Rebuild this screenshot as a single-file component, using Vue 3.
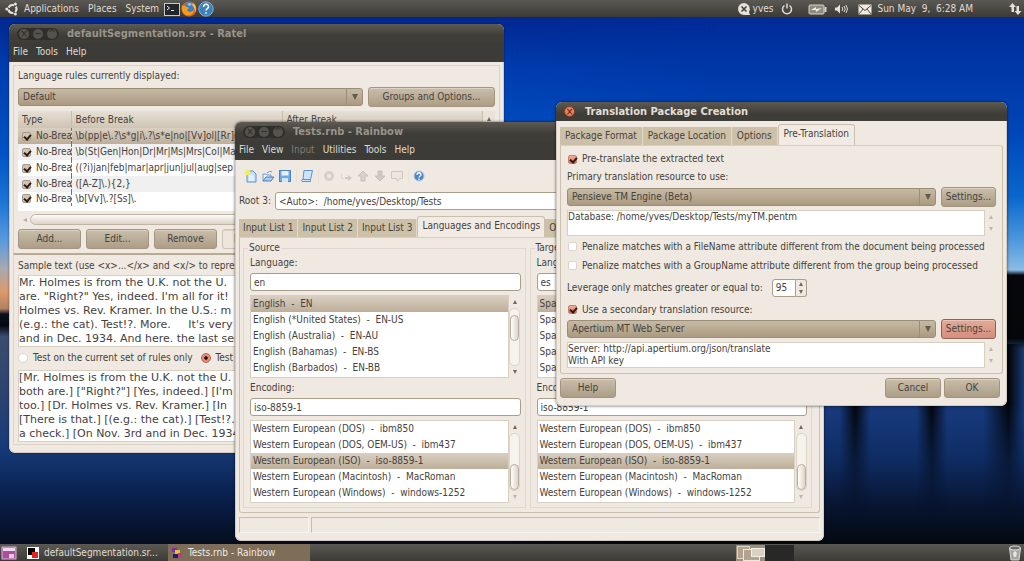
<script setup>
import { ref } from 'vue'

const rules = [
  '\\b(pp|e\\.?\\s*g|i\\.?\\s*e|no|[Vv]ol|[Rr]ev',
  '\\b(St|Gen|Hon|Dr|Mr|Ms|Mrs|Col|Maj',
  '((?i)jan|feb|mar|apr|jun|jul|aug|sep',
  '([A-Z]\\.){2,}',
  '\\b[Vv]\\.?[Ss]\\.'
]
const english = [
  'English  -  EN',
  'English (*United States)  -  EN-US',
  'English (Australia)  -  EN-AU',
  'English (Bahamas)  -  EN-BS',
  'English (Barbados)  -  EN-BB'
]
const spanish = ['Spanish', 'Spanish', 'Spanish', 'Spanish', 'Spanish']
const encodings = [
  'Western European (DOS)  -  ibm850',
  'Western European (DOS, OEM-US)  -  ibm437',
  'Western European (ISO)  -  iso-8859-1',
  'Western European (Macintosh)  -  MacRoman',
  'Western European (Windows)  -  windows-1252'
]
const groups = [
  { id: 'src', title: 'Source', code: 'en', languages: english },
  { id: 'trg', title: 'Target', code: 'es', languages: spanish }
]
const sample = ref([
  'Mr. Holmes is from the U.K. not the U.',
  'are. "Right?" Yes, indeed. I\'m all for it!',
  'Holmes vs. Rev. Kramer. In the U.S.: m',
  '(e.g.: the cat). Test!?. More.     It\'s very',
  'and in Dec. 1934. And here. the last sen'
].join('\n'))
const result = ref([
  '[Mr. Holmes is from the U.K. not the U.',
  'both are.] ["Right?"] [Yes, indeed.] [I\'m',
  'too.] [Dr. Holmes vs. Rev. Kramer.] [In',
  '[There is that.] [(e.g.: the cat).] [Test!?.',
  'a check.] [On Nov. 3rd and in Dec. 1934'
].join('\n'))
const database = ref('Database: /home/yves/Desktop/Tests/myTM.pentm')
const server = ref('Server: http://api.apertium.org/json/translate\nWith API key')
const rainbowTabs = ['Input List 1', 'Input List 2', 'Input List 3', 'Languages and Encodings', 'Other Settings']
const packageTabs = ['Package Format', 'Package Location', 'Options', 'Pre-Translation']
</script>

<template>
  <div class="desktop">
    <div class="scenery"></div>

    <header class="bar top">
      <svg class="i14" viewBox="0 0 14 14"><circle cx="7.5" cy="7" r="4" fill="none" stroke="#e6e2da" stroke-width="2.2" stroke-dasharray="6.4 2" stroke-dashoffset="3.2" /><circle cx="1.8" cy="7" r="1.5" fill="#e6e2da" /><circle cx="10.4" cy="1.9" r="1.5" fill="#e6e2da" /><circle cx="10.4" cy="12.1" r="1.5" fill="#e6e2da" /></svg>
      <nav class="launch">
        <a href="#">Applications</a><a href="#">Places</a><a href="#">System</a>
      </nav>
      <div class="apps">
        <svg class="i16" viewBox="0 0 16 16"><rect x="0.5" y="2.5" width="15" height="12" fill="#22262a" stroke="#c9c9c5" /><path d="M3 5l2.5 2L3 9M7 9.5h3" stroke="#eee" fill="none" /></svg>
        <svg class="i16" viewBox="0 0 16 16"><circle cx="8" cy="8" r="7.5" fill="#e2661b" /><circle cx="8.5" cy="6" r="5" fill="#3d7fc4" /><path d="M6 3q3-2 5 0-1 2-3 2z" fill="#8fc0ea" /><path d="M1 4c1 1 2 1 3 1l4 2-2 2c1 2 4 3 7 0-1 5-5 6-8 5S0 9 1 4z" fill="#f39a1f" /><path d="M12 2c3 2 4 6 2 9 0-3-1-5-3-7z" fill="#f7c33a" /></svg>
        <svg class="i16" viewBox="0 0 16 16"><circle cx="8" cy="8" r="7.2" fill="#3f80bb" stroke="#7db0da" /><path d="M5.5 6c0-4 5.500-3.500 5 0-.3 1.600-2.500 1.700-2.500 3.600M8 11.300v1.500" stroke="#fff" stroke-width="1.500" fill="none" /></svg>
      </div>
      <div class="tray">
        <svg class="i14" viewBox="0 0 14 14"><path d="M7 1a6 6 0 1 0 0 12h6l-1-3A6 6 0 0 0 7 1z" fill="#e6e2da" /><path d="M4.500 4.500l5 5m0-5l-5 5" stroke="#45433e" stroke-width="1.600" /></svg>
        <span class="user">yves</span>
        <svg class="i14 power" viewBox="0 0 14 14"><path d="M4.500 3.500a4.500 4.500 0 1 0 5 0M7 1.500v5" fill="none" stroke="#dedad2" stroke-width="1.500" /></svg>
        <svg class="i20" viewBox="0 0 20 14"><rect x="1" y="3" width="15" height="9" rx="1" fill="#8d8b82" stroke="#d8d4ca" /><rect x="16.500" y="5" width="2" height="5" fill="#d8d4ca" /><path d="M3 8l5-3v2l6-1-6 4V8z" fill="#eeeae0" /></svg>
        <svg class="i14 sound" viewBox="0 0 14 14"><path d="M1 5.500h2l3-3v9l-3-3H1z" fill="#e6e2da" /><path d="M8 5q1.500 2 0 4M10 4q2.500 3 0 6M12 3q3 4 0 8" fill="none" stroke="#dedad2" /></svg>
        <svg class="i14" viewBox="0 0 14 14"><rect x="0.500" y="2.500" width="13" height="10" fill="#efebe0" /><path d="M1 3.500l6 5 6-5M1 12l4-5M13 12L9 7" fill="none" stroke="#4a4842" /></svg>
        <time class="clock">Sun May&nbsp; 9,&nbsp; 6:28 AM</time>
        <svg class="i14" viewBox="0 0 14 14"><path d="M4.500 1L8 5H6v5H3.500V5H1zM10 13L6.500 9h2V4H11v5h2.500z" fill="#e6e2da" /></svg>
      </div>
    </header>

    <!-- Ratel -->
    <section class="window ratel">
      <div class="title dim">
        <span class="pill"><i>×</i><i>−</i><i>^</i></span>
        <h1>defaultSegmentation.srx - Ratel</h1>
      </div>
      <nav class="menu"><a href="#">File</a><a href="#">Tools</a><a href="#">Help</a></nav>
      <div class="body">
        <div class="frame upper">
          <label class="line" for="langrules">Language rules currently displayed:</label>
          <div class="pick">
            <div class="combo"><select id="langrules"><option>Default</option></select><b></b></div>
            <button class="options">Groups and Options...</button>
          </div>
          <div class="grid">
            <table>
              <thead><tr><th class="c1">Type</th><th class="c2">Before Break</th><th>After Break</th></tr></thead>
              <tbody>
                <tr v-for="(r, i) in rules" :key="i" :class="{ on: i === 0, odd: i % 2 === 1 }">
                  <td class="c1"><label><input type="checkbox" class="check tan" checked /><span>No-Break</span></label></td>
                  <td class="c2">{{ r }}</td>
                  <td></td>
                </tr>
              </tbody>
            </table>
            <div class="side"><b class="up"></b></div>
          </div>
          <div class="hscroll"><b class="left"></b><span></span></div>
          <div class="actions">
            <button>Add...</button><button>Edit...</button><button>Remove</button><button disabled>Move Up</button><button disabled>Move Down</button>
          </div>
        </div>
        <div class="frame lower">
          <label class="line clip" for="sample">Sample text (use &lt;x&gt;...&lt;/x&gt; and &lt;x/&gt; to repres</label>
          <textarea id="sample" v-model="sample" class="big" rows="5"></textarea>
          <div class="radios">
            <label><input type="radio" name="scope" />Test on the current set of rules only</label>
            <label><input type="radio" name="scope" checked />Test</label>
          </div>
          <textarea v-model="result" class="big" rows="5" aria-label="Segmented text"></textarea>
        </div>
      </div>
    </section>

    <!-- Rainbow -->
    <section class="window rainbow">
      <div class="title dim">
        <span class="pill"><i>×</i><i>−</i><i>^</i></span>
        <h1>Tests.rnb - Rainbow</h1>
      </div>
      <nav class="menu"><a href="#">File</a><a href="#">View</a><a href="#" class="off">Input</a><a href="#">Utilities</a><a href="#">Tools</a><a href="#">Help</a></nav>
      <div class="body">
        <div class="tools">
          <button aria-label="New"><svg viewBox="0 0 14 14"><path d="M3 2h6l3 3v8H3z" fill="#c6e0fa" stroke="#5b92d0" /><path d="M5 7h5M5 9h5M5 11h5" stroke="#fff" /><circle cx="3.500" cy="3.500" r="2.800" fill="#f5ee5c" /></svg></button>
          <button aria-label="Open"><svg viewBox="0 0 14 14"><path d="M2 12V5h3l1 1h4v2" fill="#e9f3fd" stroke="#6c9bd0" /><path d="M2 12l3-4h8l-3 4z" fill="#a9cdf3" stroke="#4a7fc0" /><path d="M6 4q3-3 5-1" fill="none" stroke="#6c9bd0" /></svg></button>
          <button aria-label="Save"><svg viewBox="0 0 14 14"><rect x="1.500" y="1.500" width="11" height="11" fill="#6ea8e6" stroke="#4a82c6" /><rect x="3.500" y="2" width="7" height="4.500" fill="#e8f2fc" /><rect x="4" y="9" width="6" height="4" fill="#d5e5f7" /></svg></button>
          <i></i>
          <button aria-label="Log"><svg viewBox="0 0 14 14"><path d="M4 1.500h8.500l-2 9v2H2q-1-1 0-2h1z" fill="#cfe4fb" stroke="#5e92cf" /><path d="M2 10.500h8.500" stroke="#5e92cf" /></svg></button>
          <i></i>
          <button aria-label="Add" disabled><svg viewBox="0 0 14 14"><circle cx="7" cy="7" r="3.500" fill="#efebe4" stroke="#d6d1c8" stroke-width="3" /></svg></button>
          <button aria-label="Add as" disabled><svg viewBox="0 0 14 14"><path d="M2.500 4.500v5h3" fill="none" stroke="#ddd8d0" /><path d="M6 8h3V6l4 3-4 3v-2H6z" fill="#cfcac1" /></svg></button>
          <button aria-label="Up" disabled><svg viewBox="0 0 14 14"><path d="M7 2l5 5H9v5H5V7H2z" fill="#d9d4cb" stroke="#c6c0b6" /></svg></button>
          <button aria-label="Down" disabled><svg viewBox="0 0 14 14"><path d="M7 12l5-5H9V2H5v5H2z" fill="#cfcac0" stroke="#c6c0b6" /></svg></button>
          <button aria-label="View" disabled><svg viewBox="0 0 14 14"><path d="M1.500 2.500h11v7h-3l-2 3-1-3h-5z" fill="#ebe6df" stroke="#cdc7be" /></svg></button>
          <i></i>
          <button aria-label="Help"><svg viewBox="0 0 14 14"><circle cx="7" cy="7" r="5" fill="#4d86c8" stroke="#b4cdea" /><path d="M5 6c0-3 4-3 4 0 0 1-2 1-2 2.500M7 9.500V11" stroke="#fff" stroke-width="1.300" fill="none" /></svg></button>
        </div>
        <div class="root"><label for="root">Root 3:</label><input id="root" type="text" value="&lt;Auto&gt;:  /home/yves/Desktop/Tests" /></div>
        <div class="tabs"><button v-for="(t, i) in rainbowTabs" :key="t" :class="{ active: i === 3 }">{{ t }}</button></div>
        <div class="panel pair">
          <fieldset v-for="g in groups" :key="g.id">
            <legend>{{ g.title }}</legend>
            <label :for="g.id + '-lang'">Language:</label>
            <input :id="g.id + '-lang'" type="text" :value="g.code" />
            <div class="listrow">
              <ul><li v-for="(l, i) in g.languages" :key="i" :class="{ on: i === 0 }">{{ l }}</li></ul>
              <div class="scroll"><b class="up"></b><span class="track"><em></em></span><b class="down"></b></div>
            </div>
            <label :for="g.id + '-enc'">Encoding:</label>
            <input :id="g.id + '-enc'" type="text" value="iso-8859-1" />
            <div class="listrow">
              <ul><li v-for="(l, i) in encodings" :key="i" :class="{ on: i === 2 }">{{ l }}</li></ul>
              <div class="scroll end"><b class="up"></b><span class="track"><em></em></span><b class="down pale"></b></div>
            </div>
          </fieldset>
        </div>
        <div class="status"><span></span><span></span></div>
      </div>
    </section>

    <!-- Translation package dialog -->
    <section class="window dialog">
      <div class="title">
        <button class="close" aria-label="Close">×</button>
        <h1>Translation Package Creation</h1>
      </div>
      <div class="body">
        <div class="tabs"><button v-for="(t, i) in packageTabs" :key="t" :class="{ active: i === 3 }">{{ t }}</button></div>
        <div class="panel form">
          <label class="opt"><input type="checkbox" class="check" checked />Pre-translate the extracted text</label>
          <label class="line" for="primary">Primary translation resource to use:</label>
          <div class="pick">
            <div class="combo"><select id="primary"><option>Pensieve TM Engine (Beta)</option></select><b></b></div>
            <button class="settings">Settings...</button>
          </div>
          <div class="memo"><textarea v-model="database" rows="2" aria-label="Primary settings"></textarea><div><b class="up pale"></b><b class="down pale"></b></div></div>
          <label class="opt"><input type="checkbox" class="check" />Penalize matches with a FileName attribute different from the document being processed</label>
          <label class="opt"><input type="checkbox" class="check" />Penalize matches with a GroupName attribute different from the group being processed</label>
          <div class="lever"><label for="lever">Leverage only matches greater or equal to:</label><div class="spin"><input id="lever" type="text" value="95" /><span><b class="up"></b><b class="down"></b></span></div></div>
          <label class="opt"><input type="checkbox" class="check" checked />Use a secondary translation resource:</label>
          <div class="pick">
            <div class="combo"><select aria-label="Secondary resource"><option>Apertium MT Web Server</option></select><b></b></div>
            <button class="settings hot">Settings...</button>
          </div>
          <div class="memo"><textarea v-model="server" rows="2" aria-label="Secondary settings"></textarea><div><b class="up pale"></b><b class="down pale"></b></div></div>
        </div>
        <div class="foot"><button>Help</button><button class="push">Cancel</button><button>OK</button></div>
      </div>
    </section>

    <footer class="bar bottom">
      <svg class="i16" viewBox="0 0 16 16"><rect x="1" y="2" width="14" height="12" fill="#a8509c" stroke="#dcb8d8" /><rect x="2" y="3" width="12" height="3" fill="#efd9ec" /><rect x="8" y="9" width="5" height="4" fill="#e7c6e2" /></svg>
      <button class="task"><svg class="i14" viewBox="0 0 14 14"><rect x="1" y="1" width="12" height="12" fill="#fff" /><rect x="2" y="2" width="7" height="7" fill="#000" /><rect x="6" y="6" width="6" height="6" fill="#e0261c" /></svg>defaultSegmentation.sr...</button>
      <button class="task cur"><svg class="i14" viewBox="0 0 14 14"><path d="M2 2h5v4H2z" fill="#7a2fa0" /><path d="M5 4h5v4H5z" fill="#e8c32e" /><path d="M3 8h5v4H3z" fill="#241c60" /><path d="M8 7h4v5H8z" fill="#c23a8a" /></svg>Tests.rnb - Rainbow</button>
      <div class="pager">
        <svg viewBox="0 0 58 16"><rect width="29" height="16" fill="#9c907c" /><rect x="29" width="29" height="16" fill="#282826" /><rect x="1.500" y="1.500" width="12" height="12" fill="#b0a18b" stroke="#ddd6c8" /><rect x="7.500" y="4.500" width="16" height="11" fill="#b3a48f" stroke="#eee8dc" /><rect x="15.500" y="3.500" width="13" height="8" fill="#d8d2c5" stroke="#f2eee6" /></svg>
      </div>
      <svg class="i16" viewBox="0 0 16 16"><path d="M2.500 3h11l-1.500 12H4z" fill="#a5a5a1" stroke="#d6d6d2" /><ellipse cx="8" cy="3" rx="5.500" ry="2" fill="#6b6b68" stroke="#e2e2de" /><path d="M6 8l2-2 2 2-1 4H7z" fill="#e5e5e2" /></svg>
    </footer>
  </div>
</template>

<style>
html, body { margin: 0; height: 100%; }
</style>

<style scoped>
* { box-sizing: border-box; }
.desktop {
  position: relative; display: flex; flex-direction: column; justify-content: space-between;
  min-height: 100vh; overflow: hidden; color: #45423d;
  font: 10px/12px "DejaVu Sans Condensed", "DejaVu Sans", sans-serif;
  background: linear-gradient(#002790 3%, #003cae 12%, #0052c4 27%, #1d74d6 36%, #5b9bdc 43%, #a9a9b0 48%, #dc9a68 52%, #b38163 55%, #0a0f1c 56%, #05070e 58%, #3b4d6e 60%, #2c4370 70%, #163a78 80%, #0a2150 88%, #060d1e 97%);
}
.scenery {
  position: absolute; top: 17px; bottom: 17px; right: 0; width: 50%;
  background: linear-gradient(#002b98, #0046b8 22%, #0a66cc 34%, #4b95dc 42%, #8bbce6 48%, #05070c 49%, #04060a 61%, #1c3a6c 63%, #16387a 76%, #0f2c62 84%, #081430 93%, #04080f);
  mask-image: linear-gradient(90deg, transparent, #000 40%);
}
.scenery::after {
  content: ""; position: absolute; left: 0; right: 0; top: 62%; bottom: 0;
  background: linear-gradient(90deg, transparent 64%, #020409 67%, transparent 70%, transparent 79%, #020409 82%, transparent 85%, transparent 92%, #020409 97%, transparent);
  mask-image: linear-gradient(#000 30%, transparent 85%);
}
button, input, select, textarea { font: inherit; color: inherit; margin: 0; }
button { padding: 0; }
a { color: inherit; text-decoration: none; }
h1 { margin: 0; font-size: 11px; line-height: 12px; font-weight: bold; }
svg { display: block; flex: none; }
.i14 { width: 14px; height: 14px; }
.i16 { width: 16px; height: 16px; }
.i20 { width: 20px; height: 14px; }

.bar { position: relative; display: flex; align-items: center; height: 17px; color: #e0dcd3; background: linear-gradient(#5b5953, #3b3a36); }
.top { padding: 0 2px 0 5px; }
.launch { display: flex; gap: 9px; margin: 0 5px; }
.apps { display: flex; gap: 1px; }
.tray { display: flex; align-items: center; margin-left: auto; }
.user { margin: 0 7px 0 2px; }
.power { margin-right: 14px; }
.sound { margin: 0 10px 0 6px; }
.clock { margin: 0 35px 0 5px; }
.bottom { gap: 2px; padding: 0 1px; }
.task { display: flex; align-items: center; gap: 4px; width: 142px; height: 17px; padding: 0 2px; border: 0; background: none; text-align: left; }
.task:first-of-type { margin-left: 5px; }
.cur { background: #7d6d59; color: #efebe3; }
.pager { margin: 0 211px 0 auto; }
.pager svg { width: 58px; height: 16px; }

.window { position: absolute; border-radius: 6px; background: #efe9e1; box-shadow: 0 0 2px #0008; overflow: hidden; }
.ratel { left: 9px; top: 24px; width: 495px; }
.rainbow { left: 235px; top: 122px; width: 589px; box-shadow: 0 0 3px #000a; }
.dialog { left: 556px; top: 102px; width: 451px; box-shadow: 0 0 3px #000a; }
.title { display: flex; align-items: center; gap: 8px; height: 19px; padding: 0 8px; background: linear-gradient(#5d5a53, #3f3d38 60%); color: #e4dfd5; }
.dialog .title { gap: 10px; }
.dim { color: #99948a; }
.pill { display: flex; gap: 4px; align-items: center; width: 42px; height: 12px; padding: 0 2px; border-radius: 6px; background: #2f2e2b; }
.pill i { width: 10px; height: 10px; border-radius: 50%; background: #55534d; color: #2c2b28; font-style: normal; line-height: 10px; text-align: center; }
.close { width: 11px; height: 11px; border: 1px solid #8b3a22; border-radius: 50%; background: #e9825f; color: #4b1d10; line-height: 9px; text-align: center; }
.menu { display: flex; gap: 8px; height: 19px; padding: 3px 4px; background: #3c3b37; color: #dfdbd2; }
.menu .off { color: #817c72; }
.body { padding: 3px 4px 8px; border: solid #d3cbbf; border-width: 0 1px 1px; border-radius: 0 0 6px 6px; }
.body { padding-left: 3px; padding-right: 3px; padding-bottom: 7px; }

button { cursor: default; }
.pick button, .actions button, .foot button {
  height: 20px; border: 1px solid #a3957f; border-radius: 3px;
  background: linear-gradient(#cabda9, #bbae99 50%, #ac9d85); box-shadow: inset 0 1px #ddd2c1;
}
.actions button:disabled { color: #aaa297; background: #ece6dd; border-color: #cdc4b6; }
.pick button.hot { background: linear-gradient(#e2ab9a, #d58e7c); border-color: #8b6658; box-shadow: inset 0 1px #edc4b7; }
.pick { display: flex; align-items: center; gap: 5px; }
.combo { position: relative; flex: 1; display: flex; }
.combo select { appearance: none; width: 100%; height: 18px; padding: 0 4px; border: 1px solid #9b8d76; border-radius: 3px; background: linear-gradient(#c6b9a4, #b9ab93 50%, #a99a80); }
.combo b { position: absolute; right: 0; top: 1px; bottom: 1px; width: 17px; border-left: 1px solid #9b8d76; pointer-events: none; }
.combo b::after { content: ""; position: absolute; left: 5px; top: 5px; border: 3px solid transparent; border-top: 6px solid #625a4d; border-bottom: 0; }

.up, .down, .left { display: block; width: 0; height: 0; border: 2px solid transparent; }
.up { border-top: 0; border-bottom: 4px solid #6d675e; }
.down { border-bottom: 0; border-top: 4px solid #6d675e; }
.left { border-left: 0; border-right: 4px solid #b5aea3; }
.up.pale { border-bottom-color: #bdb6aa; }
.down.pale { border-top-color: #bdb6aa; }

.check { appearance: none; position: relative; flex: none; width: 9px; height: 9px; border: 1px solid #ddd5ca; border-radius: 2px; background: #fff; }
.check:checked { background: linear-gradient(#f0ab98, #dd715a); border-color: #c9826f; }
.check.tan:checked { background: #cfc4b2; border-color: #a69a86; }
.check:checked::after { content: ""; position: absolute; left: 2px; top: 0; width: 3px; height: 5px; border: solid #2c1c18; border-width: 0 2px 2px 0; transform: rotate(40deg); }
input[type="text"] { width: 100%; height: 18px; padding: 0 3px; border: 1px solid #aa9e8a; border-radius: 3px; background: #fff; }
textarea { display: block; width: 100%; resize: none; border: 1px solid #d8cfc1; background: #fff; overflow: hidden; white-space: pre; padding: 0; }
.line { display: block; line-height: 16px; }

.frame { padding: 0 4px; border: 1px solid #ddd4c7; }
.upper { padding-top: 2px; border-bottom: 2px solid #b9aa93; }
.lower { border-top: 0; padding-top: 3px; padding-bottom: 2px; }
.upper .line { margin-bottom: 3px; }
.options { width: 127px; }
.grid { display: flex; margin-top: 4px; }
table { flex: 1; table-layout: fixed; width: 0; border-collapse: collapse; background: #fff; }
th { height: 17px; padding: 0 4px; text-align: left; font-weight: normal; background: linear-gradient(#e6dfd4, #cfc4b4); border-right: 1px solid #c9bead; }
td { height: 16px; padding: 0 4px; white-space: nowrap; overflow: hidden; }
.c1 { width: 53px; }
td.c1 { border-right: 1px dashed #77726a; padding-right: 0; }
.c2 { width: 211px; }
td label { display: flex; align-items: center; gap: 5px; }
.on { background: linear-gradient(#d9cfc1, #bdae99); }
.odd { background: #f0f0f0; }
tbody { border-bottom: 5px solid #fff; }
.side { width: 12px; padding: 6px 4px; background: #e9e2d7; }
.hscroll { display: flex; align-items: center; gap: 3px; height: 12px; margin-top: 3px; padding-left: 5px; }
.hscroll span { flex: 1; height: 11px; border: 1px solid #bfb5a5; border-radius: 6px; background: linear-gradient(#fdfbf7, #ddd4c6); }
.actions { display: flex; gap: 5px; margin: 3px 0 4px; }
.actions button { width: 63px; }
.actions button:last-child { flex: 1; }
.clip { white-space: nowrap; }
.big { font-family: "DejaVu Sans", sans-serif; font-size: 11px; line-height: 14px; }
.lower .line { margin-bottom: 1px; }
.radios { display: flex; gap: 8px; height: 23px; }
.radios label { display: flex; align-items: center; gap: 5px; }
.radios input { appearance: none; width: 10px; height: 10px; border: 1px solid #ddd5ca; border-radius: 50%; background: #fff; }
.radios input:checked { border-color: #b9644f; background: radial-gradient(#1d0d0a 0 25%, #e58a76 35%); }

.tools { display: flex; align-items: center; gap: 3px; height: 26px; padding: 0 5px; }
.tools button { width: 14px; height: 14px; border: 0; background: none; }
.tools i { width: 1px; height: 14px; margin-left: 1px; background: #e8e1d8; }
.root { display: flex; align-items: center; gap: 4px; margin-top: 3px; white-space: nowrap; }
.root input { white-space: pre; }

.tabs { display: flex; align-items: flex-end; height: 21px; overflow: hidden; }
.tabs button { height: 18px; padding: 0 5px; border: 0; border-right: 1px solid #e3dac9; background: #cdc0a8; white-space: nowrap; }
.tabs .active { height: 21px; padding-bottom: 2px; border: 1px solid #cbc0ae; border-bottom: 0; border-radius: 3px 3px 0 0; background: #f1ebe4; }
.rainbow .tabs { margin-top: 6px; }
.rainbow .tabs button { padding-left: 4px; padding-right: 4px; }
.panel { border: 1px solid #cbc0ae; border-top-color: #d8cfc0; border-radius: 0 3px 3px 3px; }
.pair { display: flex; gap: 4px; padding: 4px 7px 4px 3px; }
fieldset { flex: 1; min-width: 0; margin: 0; padding: 2px 4px 1px 6px; border: 1px solid #e0d8cc; }
legend { margin-left: -2px; padding: 0 1px; }
fieldset label { display: block; line-height: 14px; margin-bottom: 3px; }
.listrow { display: flex; margin: 4px 0 3px; }
ul { flex: 1; margin: 0; padding: 0 0 1px; list-style: none; background: #fff; border: 1px solid #d8cfc1; }
li { height: 16px; padding: 0 2px; line-height: 16px; white-space: pre; }
.scroll { display: flex; flex-direction: column; align-items: center; width: 12px; padding: 5px 0 4px; }
.track { flex: 1; display: flex; flex-direction: column; width: 11px; margin: 4px 0; padding-top: 6px; border: 1px solid #ddd5c8; border-radius: 5px; background: #f6f2ec; }
.track em { height: 26px; border: 1px solid #b9ae9d; border-radius: 5px; background: linear-gradient(90deg, #fff, #ddd3c4); }
.end .track { justify-content: flex-end; padding: 0; }
.status { display: flex; gap: 2px; margin-top: 4px; }
.status span { height: 16px; border: 1px solid #c9beae; border-right-color: #f8f4ee; border-bottom-color: #f8f4ee; width: 70px; }
.status span:last-child { flex: 1; }

.form { padding: 5px 6px 4px; }
.opt { display: flex; align-items: center; gap: 5px; height: 19px; padding-left: 1px; white-space: nowrap; }
.form .opt:first-child { height: 16px; }
.form .line { margin: 2px 0; }
.settings { width: 55px; }
.memo { display: flex; margin: 3px 0 1px; }
.memo textarea { flex: 1; height: 26px; }
.memo div { display: flex; flex-direction: column; justify-content: space-between; width: 11px; padding: 5px 4px; }
.lever { display: flex; align-items: center; gap: 9px; height: 25px; }
.spin { display: flex; width: 35px; }
.spin input[type="text"] { border-radius: 3px 0 0 3px; }
.spin span { display: flex; flex: none; flex-direction: column; justify-content: space-around; align-items: center; width: 11px; border: 1px solid #aa9e8a; border-left: 0; border-radius: 0 3px 3px 0; }
.foot { display: flex; gap: 3px; margin-top: 4px; padding-right: 3px; }
.foot button { width: 56px; }
.foot .push { margin-left: auto; }
</style>
